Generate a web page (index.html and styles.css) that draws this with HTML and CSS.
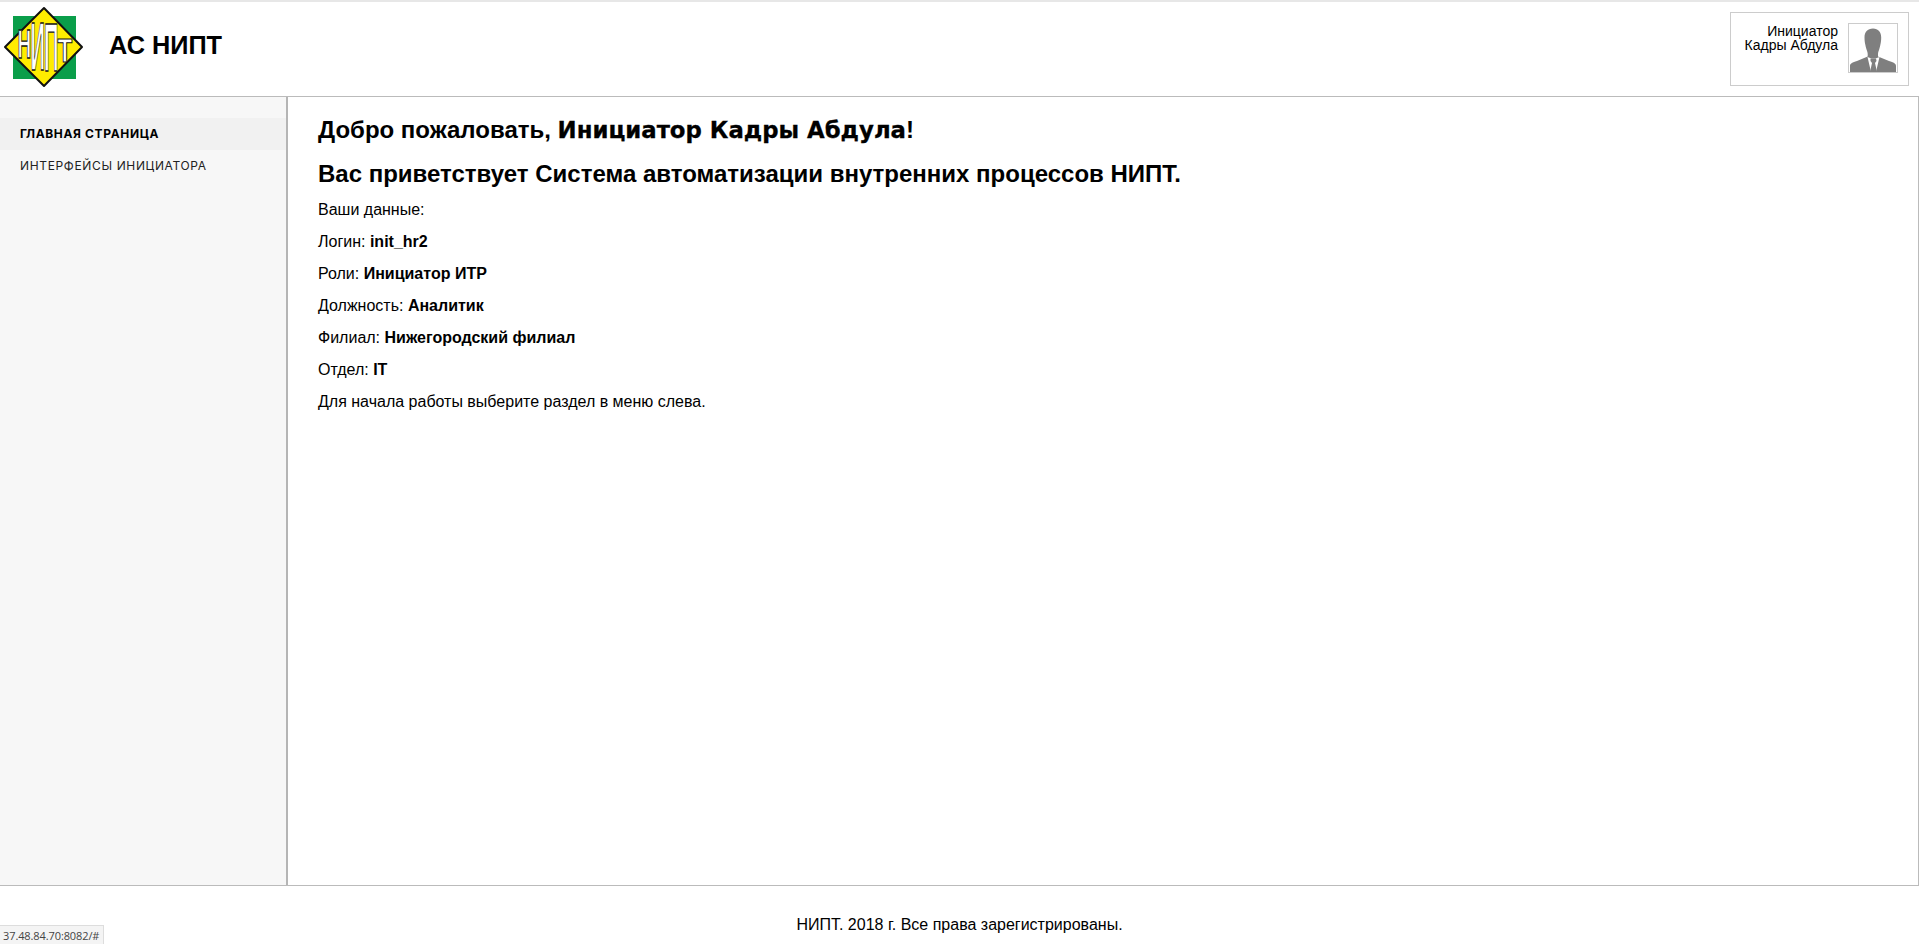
FILE: index.html
```html
<!DOCTYPE html>
<html lang="ru">

<head>
    <meta charset="UTF-8">
    <title>АС НИПТ</title>
    <link rel="stylesheet" href="styles.css">
</head>

<body>
    <div class="page">
        <header class="top-bar">
            <div class="brand">
                <svg class="logo" width="82" height="82" viewBox="0 0 82 82" xmlns="http://www.w3.org/2000/svg">
                    <rect x="10" y="10" width="63" height="63" fill="#0a9e4a" />
                    <polygon points="41,2 79,41 41,80 2,41" fill="#ffec00" stroke="#111" stroke-width="2" stroke-linejoin="round" />
                    <text class="logo-letter" transform="translate(14.500 52) scale(0.95 2)">Н</text>
                    <text class="logo-letter" transform="translate(27.500 64) scale(1 3.400)">И</text>
                    <text class="logo-letter" transform="translate(41 65) scale(1 3.400)">П</text>
                    <text class="logo-letter" transform="translate(54.500 56) scale(1.200 1.700)">Т</text>
                </svg>
                <span class="brand-name">АС НИПТ</span>
            </div>
            <div class="user-box">
                <div class="user-name">Инициатор<br>Кадры Абдула</div>
                <div class="avatar">
                    <svg width="48" height="48" viewBox="0 0 48 48" xmlns="http://www.w3.org/2000/svg">
                        <path fill="#7f7f7f" d="M24 4.500c-5.500 0-8.500 3.500-8.500 9 0 3 .4 5.500.9 7.500.3 1.500.6 3 1.300 5 .5 1.500 1 2.500 1 4v2.500L8 37C3.500 38.200 1 39.500 1 42v6h46v-6c0-2.500-2.500-3.800-7-5l-11-4.500V30c0-1.500.5-2.500 1-4 .7-2 1-3.500 1.300-5 .5-2 .9-4.500.9-7.500 0-5.500-3-9-8.200-9z" />
                        <path fill="#fff" d="M18.500 33l3.500 15h5l3.500-15-4 1.500h-4z" />
                        <path fill="#7f7f7f" d="M21.500 34.500h5.500l.5 2.500-1.500 2 2 9h-7l2-9-1.500-2z" />
                    </svg>
                </div>
            </div>
        </header>

        <div class="workspace">
            <nav class="side-menu">
                <a class="menu-item active" href="#">Главная страница</a>
                <a class="menu-item" href="#">Интерфейсы инициатора</a>
            </nav>
            <main class="content">
                <h2>Добро пожаловать, <b class="user-strong">Инициатор Кадры Абдула</b>!</h2>
                <h3>Вас приветствует Система автоматизации внутренних процессов НИПТ.</h3>
                <p>Ваши данные:</p>
                <p>Логин: <b>init_hr2</b></p>
                <p>Роли: <b>Инициатор ИТР</b></p>
                <p>Должность: <b>Аналитик</b></p>
                <p>Филиал: <b>Нижегородский филиал</b></p>
                <p>Отдел: <b>IT</b></p>
                <p>Для начала работы выберите раздел в меню слева.</p>
            </main>
        </div>

        <footer class="bottom-bar">НИПТ. 2018 г. Все права зарегистрированы.</footer>
    </div>

    <div class="status-link">37.48.84.70:8082/#</div>
</body>

</html>
```

FILE: styles.css
```css
* {
    box-sizing: border-box;
}

html,
body {
    height: 100%;
}

body {
    margin: 0;
    font-family: "Liberation Sans", Arial, sans-serif;
    font-size: 16px;
    color: #000;
    background-color: #fff;
}

.page {
    height: 100%;
    display: flex;
    flex-direction: column;
}

.top-bar {
    height: 96px;
    flex: none;
    display: flex;
    justify-content: space-between;
    align-items: flex-start;
    border-top: 2px solid #e7e7e7;
    padding: 4px 10px 0 3px;
}

.brand {
    display: flex;
    align-items: center;
}

.logo {
    display: block;
}

.logo-letter {
    font-family: "Liberation Sans", Arial, sans-serif;
    font-size: 20px;
    font-weight: bold;
    fill: #fff;
    stroke: #111;
    stroke-width: 1px;
    vector-effect: non-scaling-stroke;
}

.brand-name {
    margin-left: 24px;
    margin-bottom: 4px;
    font-size: 25.3px;
    font-weight: bold;
}

.user-box {
    width: 179px;
    height: 74px;
    margin-top: 6px;
    display: flex;
    justify-content: flex-end;
    align-items: flex-start;
    gap: 10px;
    padding: 10px 10px 0 0;
    border: 1px solid #ccc;
}

.user-name {
    font-size: 14px;
    line-height: 14px;
    text-align: right;
    padding-top: 1px;
}

.avatar {
    width: 50px;
    height: 50px;
    border: 1px solid #ccc;
}

.avatar svg {
    display: block;
}

.workspace {
    flex: 1;
    min-height: 0;
    display: flex;
    border-top: 1px solid #bbb;
    border-bottom: 1px solid #bbb;
    border-right: 1px solid #bbb;
}

.side-menu {
    width: 288px;
    flex: none;
    padding-top: 21px;
    background-color: #f7f7f7;
    border-right: 2px solid #b5b5b5;
}

.menu-item {
    display: block;
    height: 32px;
    padding-left: 20px;
    font-family: Inter, "Noto Sans", sans-serif;
    font-size: 12px;
    letter-spacing: 0.65px;
    line-height: 32px;
    text-transform: uppercase;
    text-decoration: none;
    color: #222;
}

.menu-item.active {
    font-weight: bold;
    color: #000;
    background-color: #f1f1f1;
}

.content {
    flex: 1;
    padding: 19px 30px 0 30px;
}

.content h2 {
    margin: 0 0 16px 0;
    font-size: 24px;
    line-height: 28px;
}

.user-strong {
    font-family: "DejaVu Sans", sans-serif;
    font-size: 22.8px;
    -webkit-text-stroke: 0.3px #000;
}

.content h3 {
    margin: 0 0 13px 0;
    font-size: 24px;
    line-height: 28px;
}

.content p {
    margin: 0 0 14px 0;
    font-size: 16px;
    line-height: 18px;
}

.bottom-bar {
    height: 58px;
    flex: none;
    padding-top: 30px;
    text-align: center;
    font-size: 16px;
    line-height: 18px;
}

.status-link {
    position: fixed;
    left: 0;
    bottom: 0;
    height: 19px;
    width: 104px;
    padding-left: 3px;
    font-family: "Open Sans", sans-serif;
    font-size: 11px;
    letter-spacing: -0.1px;
    line-height: 19px;
    color: #444;
    background-color: #f4f4f4;
    border-top: 1px solid #ddd;
    border-right: 1px solid #ddd;
    white-space: nowrap;
}
```
